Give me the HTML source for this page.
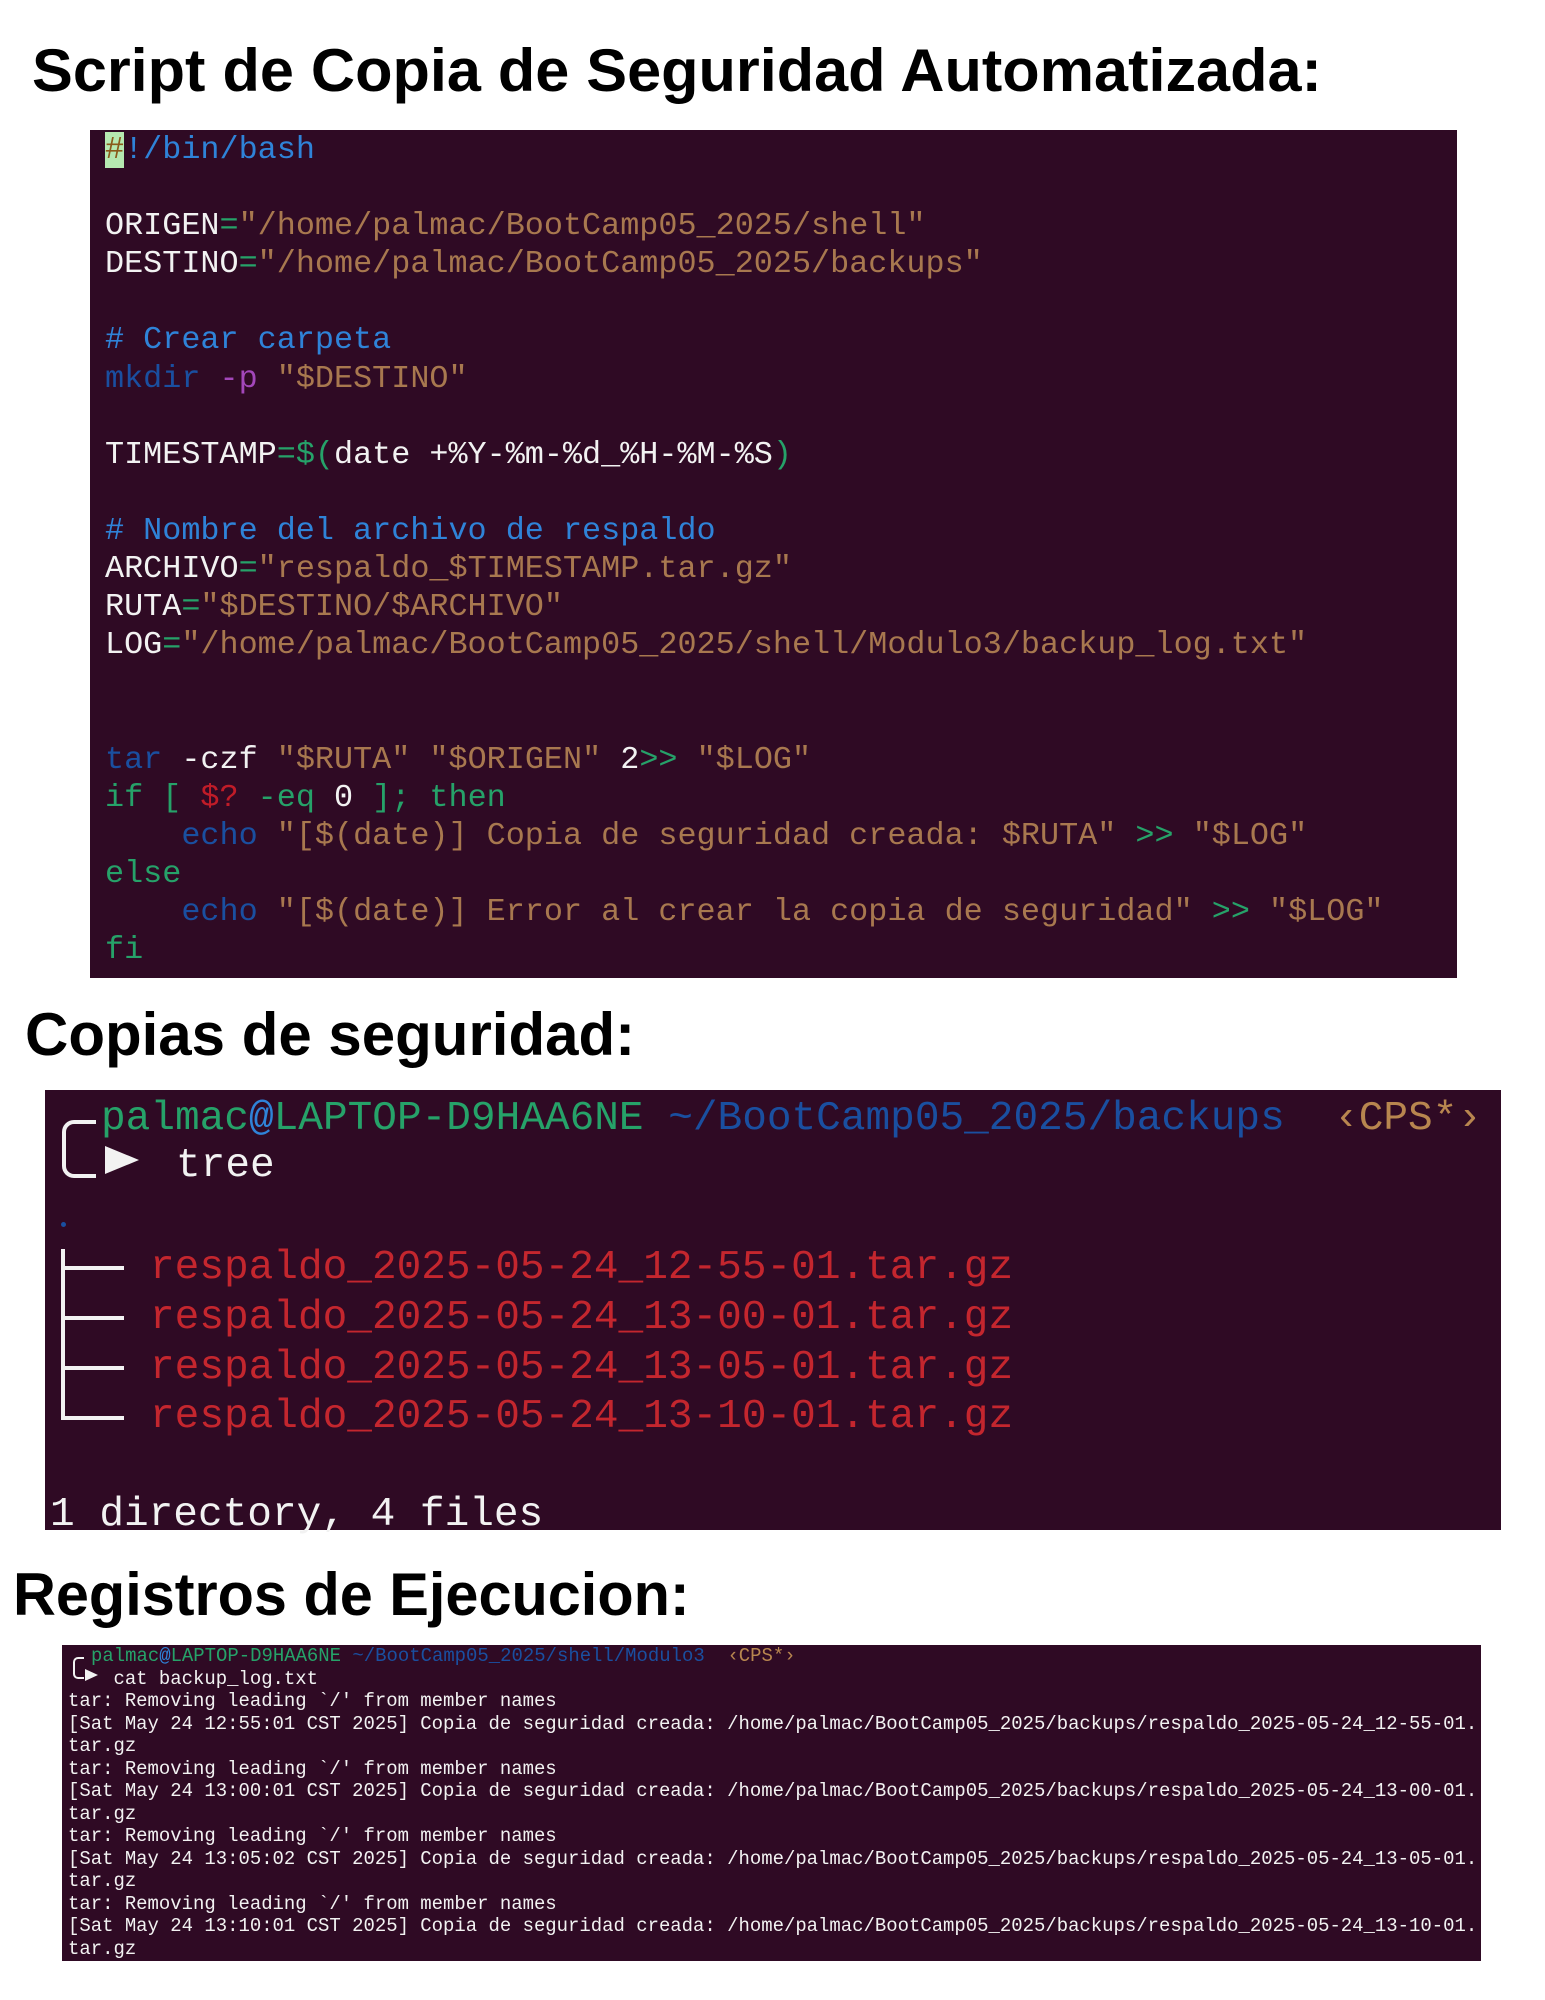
<!DOCTYPE html>
<html><head><meta charset="utf-8"><style>
body{margin:0;background:#fff;width:1545px;height:2000px;position:relative;overflow:hidden}
h1{position:absolute;margin:0;font-family:"Liberation Sans",sans-serif;font-weight:bold;color:#000;white-space:nowrap;transform-origin:left top}
.box{position:absolute;background:#2f0a24}
.m{font-family:"Liberation Mono","DejaVu Sans Mono",monospace;white-space:pre;position:absolute;left:0;margin:0;color:#f2f2f2}
.s{color:#a8784f}.g{color:#26a269}.c{color:#2f83d8}.b{color:#1a4fa0}.p{color:#a347ba}.r{color:#c01c28}.y{color:#b8864f}.rd{color:#c4262e}
</style></head><body>
<h1 style="left:32px;top:36px;font-size:60px;transform:scaleX(1.02)">Script de Copia de Seguridad Automatizada:</h1>
<div class="box" style="left:90px;top:130px;width:1367px;height:848px">
<div class="m" style="left:15px;top:1px;font-size:31.8px;line-height:38.1px"><span style="background:#b5e8b0;color:#8a5a1a">#</span><span class="c">!/bin/bash</span>

ORIGEN<span class="g">=</span><span class="s">"/home/palmac/BootCamp05_2025/shell"</span>
DESTINO<span class="g">=</span><span class="s">"/home/palmac/BootCamp05_2025/backups"</span>

<span class="c"># Crear carpeta</span>
<span class="b">mkdir</span> <span class="p">-p</span> <span class="s">"$DESTINO"</span>

TIMESTAMP<span class="g">=$(</span>date +%Y-%m-%d_%H-%M-%S<span class="g">)</span>

<span class="c"># Nombre del archivo de respaldo</span>
ARCHIVO<span class="g">=</span><span class="s">"respaldo_$TIMESTAMP.tar.gz"</span>
RUTA<span class="g">=</span><span class="s">"$DESTINO/$ARCHIVO"</span>
LOG<span class="g">=</span><span class="s">"/home/palmac/BootCamp05_2025/shell/Modulo3/backup_log.txt"</span>


<span class="b">tar</span> -czf <span class="s">"$RUTA"</span> <span class="s">"$ORIGEN"</span> 2<span class="g">&gt;&gt;</span> <span class="s">"$LOG"</span>
<span class="g">if [ </span><span class="r">$?</span><span class="g"> -eq </span>0<span class="g"> ]; then</span>
    <span class="b">echo</span> <span class="s">"[$(date)] Copia de seguridad creada: $RUTA"</span> <span class="g">&gt;&gt;</span> <span class="s">"$LOG"</span>
<span class="g">else</span>
    <span class="b">echo</span> <span class="s">"[$(date)] Error al crear la copia de seguridad"</span> <span class="g">&gt;&gt;</span> <span class="s">"$LOG"</span>
<span class="g">fi</span></div>
</div>

<h1 style="left:25px;top:1000px;font-size:60px;transform:scaleX(1.0)">Copias de seguridad:</h1>
<div class="box" style="left:45px;top:1090px;width:1456px;height:440px">
<div style="position:absolute;left:17px;top:30px;width:30px;height:50px;border:4px solid #f2f2f2;border-right:none;border-radius:12px 0 0 12px"></div>
<div style="position:absolute;left:60px;top:56px;width:0;height:0;border-left:34px solid #f2f2f2;border-top:14px solid transparent;border-bottom:14px solid transparent"></div>
<div class="m" style="left:56px;top:5px;font-size:41.1px;line-height:48px"><span class="g">palmac</span><span class="c">@</span><span class="g">LAPTOP-D9HAA6NE</span> <span class="b">~/BootCamp05_2025/backups</span>  <span class="y">‹CPS*›</span></div>
<div class="m" style="left:131px;top:52px;font-size:41.1px;line-height:48px">tree</div>
<div style="position:absolute;left:16px;top:132px;width:5px;height:5px;border-radius:50%;background:#1a4fa0"></div>
<div style="position:absolute;left:16px;top:159px;width:4px;height:170px;background:#f2f2f2"></div>
<div style="position:absolute;left:16px;top:176px;width:63px;height:4px;background:#f2f2f2"></div>
<div style="position:absolute;left:16px;top:226px;width:63px;height:4px;background:#f2f2f2"></div>
<div style="position:absolute;left:16px;top:276px;width:63px;height:4px;background:#f2f2f2"></div>
<div style="position:absolute;left:16px;top:326px;width:63px;height:4px;background:#f2f2f2"></div>
<div class="m rd" style="left:105px;top:154px;font-size:41.1px;line-height:49.8px">respaldo_2025-05-24_12-55-01.tar.gz
respaldo_2025-05-24_13-00-01.tar.gz
respaldo_2025-05-24_13-05-01.tar.gz
respaldo_2025-05-24_13-10-01.tar.gz</div>
<div class="m" style="left:5px;top:401px;font-size:41.1px;line-height:48px">1 directory, 4 files</div>
</div>

<h1 style="left:13px;top:1560px;font-size:60px;transform:scaleX(0.99)">Registros de Ejecucion:</h1>
<div class="box" style="left:62px;top:1645px;width:1419px;height:316px">
<div style="position:absolute;left:11px;top:12px;width:9px;height:18px;border:2px solid #f2f2f2;border-right:none;border-radius:5px 0 0 5px"></div>
<div style="position:absolute;left:23px;top:24px;width:0;height:0;border-left:13px solid #f2f2f2;border-top:6px solid transparent;border-bottom:6px solid transparent"></div>
<div class="m" style="left:29px;top:0;font-size:18.95px;line-height:22.5px"><span class="g">palmac</span><span class="c">@</span><span class="g">LAPTOP-D9HAA6NE</span> <span class="b">~/BootCamp05_2025/shell/Modulo3</span>  <span class="y">‹CPS*›</span></div>
<div class="m" style="left:6px;top:22.5px;font-size:18.95px;line-height:22.5px">    cat backup_log.txt
tar: Removing leading `/' from member names
[Sat May 24 12:55:01 CST 2025] Copia de seguridad creada: /home/palmac/BootCamp05_2025/backups/respaldo_2025-05-24_12-55-01.
tar.gz
tar: Removing leading `/' from member names
[Sat May 24 13:00:01 CST 2025] Copia de seguridad creada: /home/palmac/BootCamp05_2025/backups/respaldo_2025-05-24_13-00-01.
tar.gz
tar: Removing leading `/' from member names
[Sat May 24 13:05:02 CST 2025] Copia de seguridad creada: /home/palmac/BootCamp05_2025/backups/respaldo_2025-05-24_13-05-01.
tar.gz
tar: Removing leading `/' from member names
[Sat May 24 13:10:01 CST 2025] Copia de seguridad creada: /home/palmac/BootCamp05_2025/backups/respaldo_2025-05-24_13-10-01.
tar.gz</div>
</div>
</body></html>
